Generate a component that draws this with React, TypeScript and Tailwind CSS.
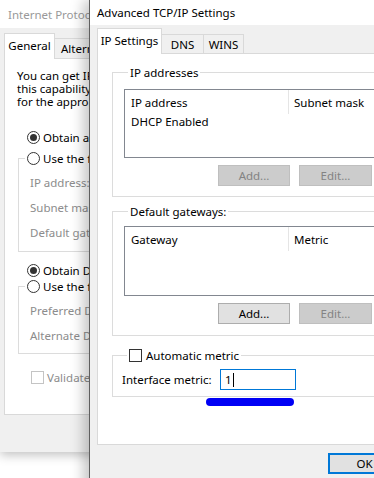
import React from 'react';

function Radio({ checked }: { checked?: boolean }) {
    return (
        <span className="flex h-[13px] w-[13px] shrink-0 items-center justify-center rounded-full border border-[#333] bg-white">
            {checked && <span className="h-[7px] w-[7px] rounded-full bg-[#333]" />}
        </span>
    );
}

function Check({ disabled }: { disabled?: boolean }) {
    return <span className={`block h-[13px] w-[13px] shrink-0 border bg-white ${disabled ? 'border-[#c4c4c4]' : 'border-[#333]'}`} />;
}

function Btn({ label, disabled, w }: { label: string; disabled?: boolean; w: string }) {
    return (
        <div
            className={`flex h-[21px] items-center justify-center border ${w} ${
                disabled ? 'border-[#bfbfbf] bg-[#cccccc] text-[#838383]' : 'border-[#adadad] bg-[#e1e1e1] text-black'
            }`}
        >
            {label}
        </div>
    );
}

function ListBox({ cols, rows, h }: { cols: [string, string]; rows: string[]; h: string }) {
    return (
        <div className={`${h} border border-[#828790] bg-white`}>
            <div className="flex h-[24px]">
                <div className="flex w-[164px] items-center border-r border-[#e5e5e5] pl-[6px]">{cols[0]}</div>
                <div className="flex items-center pl-[5px]">{cols[1]}</div>
            </div>
            {rows.map(r => (
                <div key={r} className="h-[16px] pl-[6px] leading-[16px]">{r}</div>
            ))}
        </div>
    );
}

function ButtonRow({ addEnabled }: { addEnabled?: boolean }) {
    return (
        <div className="mt-[7px] ml-[94px] flex gap-[9px]">
            <Btn label="Add..." disabled={!addEnabled} w="w-[72px]" />
            <Btn label="Edit..." disabled w="w-[73px]" />
            <Btn label="Remove" disabled w="w-[73px]" />
        </div>
    );
}

function BackWindow() {
    const disabledRow = 'flex h-[25px] items-center pl-[11px] text-[#8c8c8c] whitespace-nowrap';
    return (
        <div className="absolute left-0 top-0 z-0 flex h-[452px] w-[300px] flex-col bg-[#f0f0f0] shadow-[0_3px_10px_rgba(0,0,0,0.25)]">
            <div className="flex h-[28px] items-center bg-white pl-[8px] text-[#999] whitespace-nowrap">
                Internet Protocol Version 4 (TCP/IPv4) Properties
            </div>
            <div className="flex-1 pl-[4px]">
                <div className="relative z-10 flex h-[31px] items-end">
                    <div className="flex h-[26px] w-[51px] items-center justify-center border border-b-0 border-[#d9d9d9] bg-white pb-[2px]">
                        General
                    </div>
                    <div className="mb-px flex h-[20px] items-center border border-b-0 border-l-0 border-[#d9d9d9] px-[6px] whitespace-nowrap">
                        Alternate Configuration
                    </div>
                </div>
                <div className="-mt-px h-[357px] border border-[#d9d9d9] bg-white px-[12px] pt-[10px]">
                    <p className="leading-[13px] whitespace-nowrap">
                        You can get IP settings assigned automatically if your network supports
                        <br />
                        this capability. Otherwise, you need to ask your network administrator
                        <br />
                        for the appropriate IP settings.
                    </p>
                    <div className="mt-[22px] ml-[10px] flex h-[15px] items-center gap-[3px] whitespace-nowrap">
                        <Radio checked />
                        <span>Obtain an IP address automatically</span>
                    </div>
                    <fieldset className="mt-[6px] ml-px border border-[#dcdcdc] pt-[4px] pb-[6px]">
                        <legend className="ml-[6px] flex h-[15px] items-center gap-[3px] px-[2px] whitespace-nowrap">
                            <Radio />
                            <span>Use the following IP address:</span>
                        </legend>
                        <div className={disabledRow}>IP address:</div>
                        <div className={disabledRow}>Subnet mask:</div>
                        <div className={disabledRow}>Default gateway:</div>
                    </fieldset>
                    <div className="mt-[11px] ml-[10px] flex h-[15px] items-center gap-[3px] whitespace-nowrap">
                        <Radio checked />
                        <span>Obtain DNS server address automatically</span>
                    </div>
                    <fieldset className="mt-[1px] ml-px border border-[#dcdcdc] pt-[4px] pb-[5px]">
                        <legend className="ml-[6px] flex h-[15px] items-center gap-[3px] px-[2px] whitespace-nowrap">
                            <Radio />
                            <span>Use the following DNS server addresses:</span>
                        </legend>
                        <div className={disabledRow}>Preferred DNS server:</div>
                        <div className={disabledRow}>Alternate DNS server:</div>
                    </fieldset>
                    <div className="mt-[16px] ml-[14px] flex h-[15px] items-center gap-[3px] whitespace-nowrap text-[#8c8c8c]">
                        <Check disabled />
                        <span>Validate settings upon exit</span>
                    </div>
                </div>
            </div>
        </div>
    );
}

function FrontWindow() {
    return (
        <div className="absolute left-[89px] top-0 z-10 flex h-[500px] w-[400px] flex-col border-l border-[#5f5f5f] bg-[#f0f0f0] shadow-[-6px_0_12px_rgba(0,0,0,0.22)]">
            <div className="flex h-[25px] items-center bg-white pl-[7px] whitespace-nowrap">Advanced TCP/IP Settings</div>
            <div className="flex-1 px-[7px]">
                <div className="relative z-10 flex h-[29px] items-end">
                    <div className="flex h-[26px] w-[65px] items-center justify-center border border-b-0 border-[#d9d9d9] bg-white pb-[2px]">
                        IP Settings
                    </div>
                    <div className="mb-px flex h-[19px] w-[42px] items-center justify-center border border-b-0 border-l-0 border-[#d9d9d9]">
                        DNS
                    </div>
                    <div className="mb-px flex h-[19px] w-[40px] items-center justify-center border border-b-0 border-l-0 border-[#d9d9d9]">
                        WINS
                    </div>
                </div>
                <div className="-mt-px h-[392px] border border-[#d9d9d9] bg-white px-[14px] pt-[11px]">
                    <fieldset className="border border-[#dcdcdc] pb-[10px] pl-[11px] pr-[11px]">
                        <legend className="ml-[4px] px-[2px] leading-[15px]">IP addresses</legend>
                        <div className="mt-[9px]">
                            <ListBox cols={['IP address', 'Subnet mask']} rows={['DHCP Enabled']} h="h-[69px]" />
                        </div>
                        <ButtonRow />
                    </fieldset>
                    <fieldset className="mt-[7px] border border-[#dcdcdc] pb-[11px] pl-[11px] pr-[11px]">
                        <legend className="ml-[4px] px-[2px] leading-[15px]">Default gateways:</legend>
                        <div className="mt-[7px]">
                            <ListBox cols={['Gateway', 'Metric']} rows={[]} h="h-[70px]" />
                        </div>
                        <ButtonRow addEnabled />
                    </fieldset>
                    <fieldset className="mt-[12px] border border-[#dcdcdc] pb-[6px] pl-[9px]">
                        <legend className="ml-[5px] flex h-[15px] items-center gap-[4px] px-[2px]">
                            <Check />
                            <span>Automatic metric</span>
                        </legend>
                        <div className="mt-[6px] flex h-[21px] items-center">
                            <span className="w-[98px] whitespace-nowrap">Interface metric:</span>
                            <div className="flex h-[21px] w-[76px] items-center border border-[#0078d7] pl-[4px]">
                                <span className="border-r border-black pr-px leading-[14px]">1</span>
                            </div>
                        </div>
                    </fieldset>
                </div>
                <div className="mt-[8px] flex justify-end gap-[6px]">
                    <div className="flex h-[21px] w-[73px] items-center justify-center border-2 border-[#0078d7] bg-[#e1e1e1]">OK</div>
                    <div className="flex h-[21px] w-[75px] items-center justify-center border border-[#adadad] bg-[#e1e1e1]">Cancel</div>
                </div>
            </div>
            {/* annotation marker drawn over the dialog */}
            <div className="absolute left-[116px] top-[398px] h-[8px] w-[88px] rounded-full bg-[#0000f5]" />
        </div>
    );
}

export default function App() {
    return (
        <div className="relative h-[478px] w-[374px] overflow-hidden bg-white font-['Noto_Sans',sans-serif] text-[11.5px] leading-[15px] text-black">
            <BackWindow />
            <FrontWindow />
        </div>
    );
}
